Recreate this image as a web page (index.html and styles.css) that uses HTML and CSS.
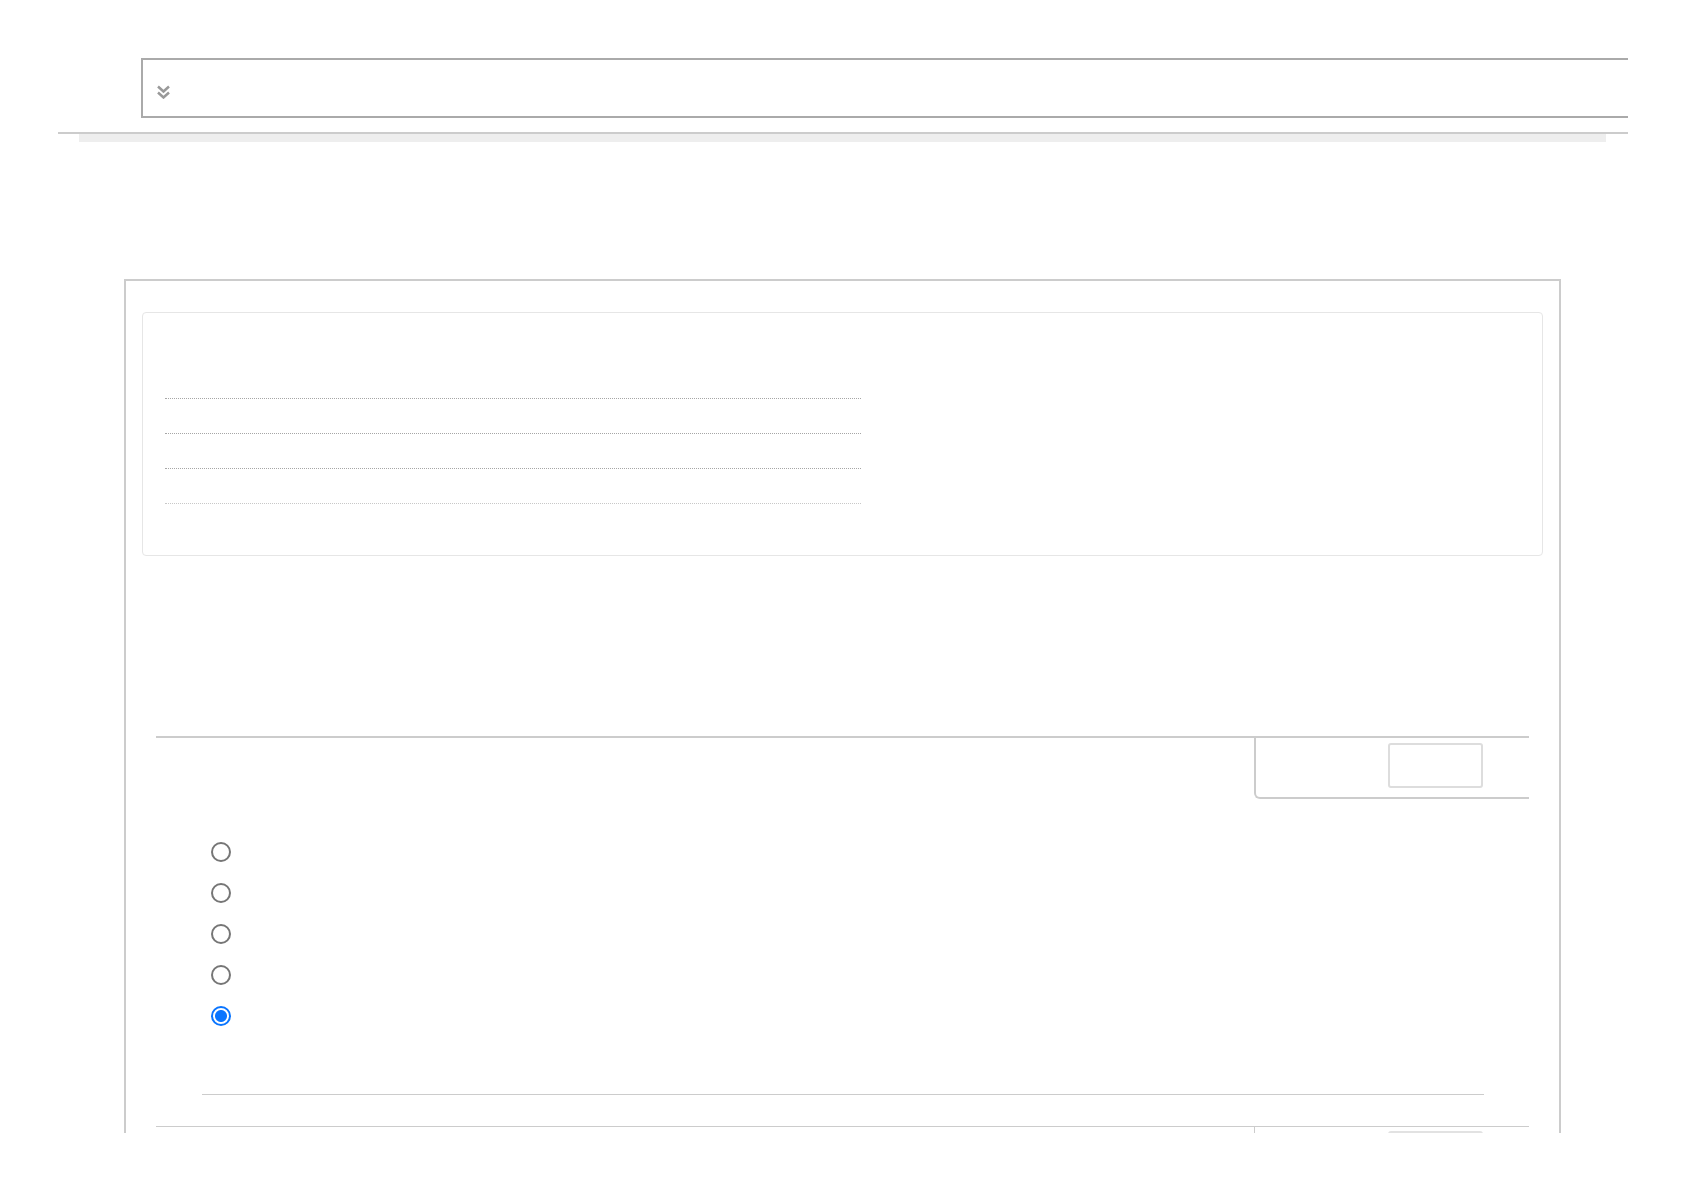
FILE: index.html
```html
<!DOCTYPE html>
<html lang="en">
<head>
    <meta charset="UTF-8">
    <meta name="viewport" content="width=device-width, initial-scale=1.0">
    <title>Survey</title>
    <link rel="stylesheet" href="styles.css">
</head>
<body>

<div class="topbar">
    <div class="search-box">
        <svg class="chevron" width="15" height="14" viewBox="0 0 15 14">
            <polyline points="2,1.5 7.5,6.5 13,1.5" fill="none" stroke="#999" stroke-width="2.5"/>
            <polyline points="2,7.5 7.5,12.5 13,7.5" fill="none" stroke="#999" stroke-width="2.5"/>
        </svg>
    </div>
    <div class="rule"></div>
    <div class="shade"></div>
</div>

<div class="page">
    <div class="card">
        <div class="dotted"></div>
        <div class="dotted"></div>
        <div class="dotted"></div>
        <div class="dotted last"></div>
    </div>

    <div class="section">
        <div class="section-head">
            <div class="tab">
                <div class="tab-btn"></div>
            </div>
        </div>
        <form class="choices">
            <input type="radio" name="q1">
            <input type="radio" name="q1">
            <input type="radio" name="q1">
            <input type="radio" name="q1">
            <input type="radio" name="q1" checked>
        </form>
        <div class="divider"></div>
    </div>

    <div class="section next">
        <div class="section-head">
            <div class="tab">
                <div class="tab-btn"></div>
            </div>
        </div>
    </div>
</div>

</body>
</html>
```

FILE: styles.css
```css
body {
    margin: 0;
    font-family: "Liberation Sans", Arial, sans-serif;
    background: #fff;
}
.topbar {
    margin-left: 58px;
    width: 1570px;
    padding-top: 58px;
}
.search-box {
    height: 60px;
    margin-left: 83px;
    border: 2px solid #aaa;
    border-right: none;
    box-sizing: border-box;
    display: flex;
    align-items: center;
    padding: 8px 0 0 13px;
}
.rule {
    margin-top: 14px;
    border-top: 2px solid #ccc;
}
.shade {
    margin: 0 22px 0 21px;
    height: 8px;
    background: #eee;
}
.page {
    margin: 137px 0 0 124px;
    width: 1437px;
    height: 854px;
    box-sizing: border-box;
    border: 2px solid #ccc;
    border-bottom: none;
    overflow: hidden;
    padding: 31px 16px 0 16px;
}
.card {
    height: 244px;
    box-sizing: border-box;
    border: 1px solid #e6e6e6;
    border-radius: 4px;
    padding: 51px 0 0 22px;
}
.dotted {
    width: 696px;
    height: 34px;
    border-bottom: 1px dotted #a6a6a6;
}
.dotted.last {
    border-bottom-color: #c8c8c8;
}
.section {
    margin: 180px 14px 0 14px;
}
.section-head {
    border-top: 2px solid #ccc;
    display: flex;
    justify-content: flex-end;
}
.tab {
    width: 275px;
    height: 61px;
    box-sizing: border-box;
    border-left: 2px solid #ccc;
    border-bottom: 2px solid #ccc;
    border-bottom-left-radius: 6px;
    display: flex;
    justify-content: flex-end;
    padding: 5px 46px 0 0;
}
.tab-btn {
    width: 95px;
    height: 45px;
    box-sizing: border-box;
    border: 2px solid #ddd;
    border-radius: 3px;
}
.choices {
    display: flex;
    flex-direction: column;
    gap: 21px;
    margin: 43px 0 0 55px;
}
.choices input {
    appearance: none;
    -webkit-appearance: none;
    width: 20px;
    height: 20px;
    margin: 0;
    box-sizing: border-box;
    border: 2px solid #767676;
    border-radius: 50%;
    background: #fff;
}
.choices input:checked {
    border-color: #0a75ff;
    background: radial-gradient(circle, #0a75ff 0, #0a75ff 5.5px, #fff 6.5px);
}
.divider {
    margin: 68px 45px 0 46px;
    border-top: 1px solid #ccc;
}
.section.next {
    margin-top: 31px;
}
.section.next .section-head {
    border-top-width: 1px;
}
.section.next .tab {
    border-left-width: 1px;
    padding-top: 4px;
}
.section.next .tab-btn {
    border-color: #e2e2e2;
}
```
